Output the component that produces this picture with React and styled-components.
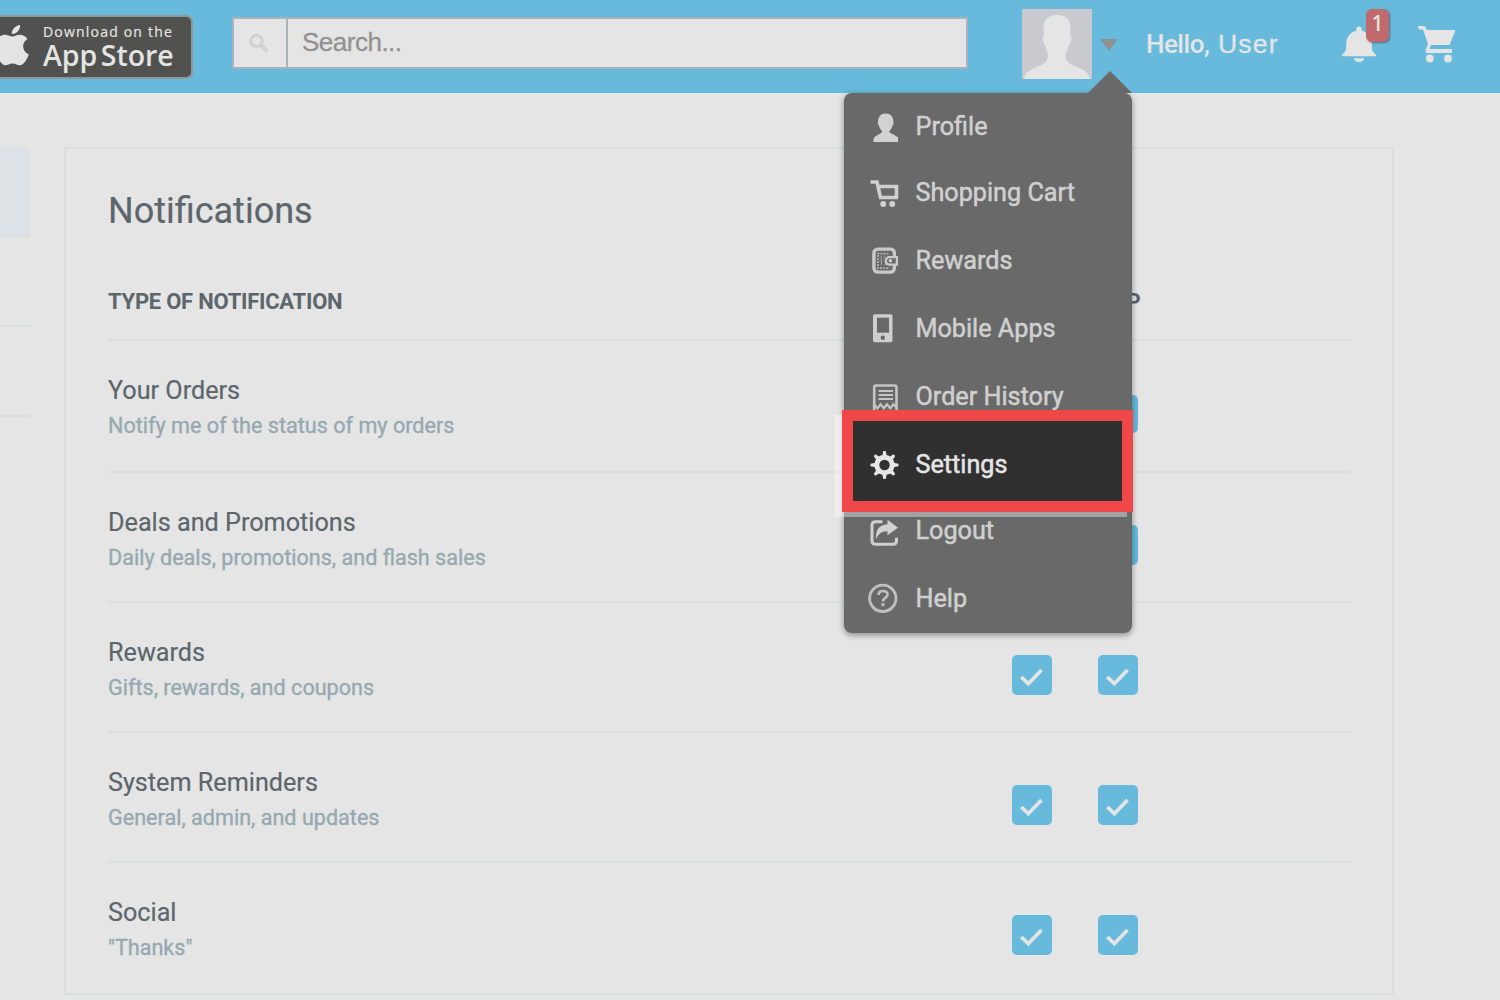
import React from "react";
import styled, { createGlobalStyle } from "styled-components";

const Global = createGlobalStyle`
  * { box-sizing: border-box; }
  body {
    margin: 0;
    background: #e5e5e5;
    font-family: Roboto, "Liberation Sans", sans-serif;
    color: #5c666c;
    overflow: hidden;
  }
`;

const Page = styled.div`
  width: 1500px;
  height: 1000px;
  overflow: hidden;
`;

const TopBar = styled.header`
  display: flex;
  align-items: flex-start;
  height: 93px;
  background: #67badb;
`;

const StoreBadge = styled.div`
  display: flex;
  width: 193px;
  height: 64px;
  margin-top: 15px;
  background: #51514f;
  border: 2px solid #8f9698;
  border-left: 0;
  border-radius: 0 7px 7px 0;
  color: #e4e4e2;
`;

const StoreLogo = styled.svg`
  flex: none;
  width: 30px;
  height: 60px;
`;

const StoreText = styled.div`
  display: flex;
  flex-direction: column;
  padding: 6px 0 0 13px;
  font-family: "Open Sans", sans-serif;
  white-space: nowrap;
`;

const StoreSmall = styled.span`
  font-size: 14px;
  line-height: 17px;
  letter-spacing: 1.2px;
  font-weight: 500;
  -webkit-text-stroke: 0.2px currentColor;
`;

const StoreLarge = styled.span`
  font-size: 28.5px;
  line-height: 30px;
  letter-spacing: 0;
  word-spacing: -4px;
  font-weight: 600;
`;

const Search = styled.div`
  display: flex;
  width: 736px;
  height: 52px;
  margin: 17px 0 0 39px;
  border: 2px solid #abb1b9;
  background: #e5e5e5;
`;

const SearchButton = styled.div`
  width: 54px;
  border-right: 2px solid #abb1b9;
  padding: 13px 0 0 14px;
`;

const SearchField = styled.div`
  padding-left: 14px;
  font-family: "Liberation Sans", Arial, sans-serif;
  font-size: 26px;
  line-height: 47px;
  letter-spacing: -0.5px;
  color: #929292;
  -webkit-text-stroke: 0.3px currentColor;
`;

const Account = styled.div`
  display: flex;
  margin-left: 54px;
  padding-top: 9px;
`;

const Avatar = styled.svg`
  width: 70px;
  height: 70px;
  background: #c9cacf;
`;

const Caret = styled.i`
  width: 0;
  height: 0;
  margin: 30px 0 0 8px;
  border: 9px solid transparent;
  border-top: 12px solid #8f9293;
  border-bottom: 0;
`;

const Greeting = styled.div`
  display: flex;
  width: 140px;
  margin-left: 28px;
  font-size: 26px;
  line-height: 70px;
  font-weight: 500;
  color: #e5e5e5;
  white-space: nowrap;
`;

const Hello = styled.span`
  width: 72px;
  letter-spacing: -0.5px;
`;

const UserName = styled.span`
  font-family: "Liberation Sans", Arial, sans-serif;
  font-size: 26.5px;
  line-height: 71px;
  font-weight: 400;
  letter-spacing: 1.2px;
  -webkit-text-stroke: 0.3px currentColor;
`;

const BellBox = styled.div`
  position: relative;
  width: 36px;
  height: 40px;
  margin: 24px 0 0 56px;
`;

const Count = styled.span`
  position: absolute;
  left: 24px;
  top: -15px;
  width: 23px;
  height: 33px;
  border-radius: 6px;
  background: #c06a6d;
  color: #e5e5e5;
  font: 500 21px/29px "Noto Sans", sans-serif;
  text-align: center;
  box-shadow: 1px 1px 2px rgba(60, 60, 90, 0.6);
`;

const CartBox = styled.div`
  margin: 23px 0 0 40px;
`;

const Body = styled.div`
  display: flex;
  align-items: flex-start;
  padding-top: 54px;
`;

const Side = styled.aside`
  width: 30px;
  margin-right: 34px;
`;

const SideItem = styled.div`
  height: 90px;
  background: ${(p) => (p.$active ? "#dde2e6" : "transparent")};
  border-bottom: 2px solid ${(p) => (p.$active ? "#d9e0e3" : "#dadfde")};
`;

const Panel = styled.main`
  width: 1330px;
  height: 848px;
  padding: 0 42px;
  border: 2px solid #dadfde;
`;

const Title = styled.h1`
  height: 110px;
  margin: 0;
  padding-top: 39px;
  font-size: 36px;
  line-height: 46px;
  font-weight: 400;
  -webkit-text-stroke: 0.2px currentColor;
`;

const HeadRow = styled.div`
  display: flex;
  height: 82px;
  border-bottom: 2px solid #dadfde;
  font-size: 22px;
  line-height: 86px;
  font-weight: 700;
`;

const HeadLabel = styled.div`
  width: 968px;
  letter-spacing: -0.25px;
`;

const HeadColumn = styled.div`
  width: 86px;
  text-align: center;
`;

const Row = styled.section`
  display: flex;
  height: ${(p) => p.$h}px;
  border-bottom: 2px solid ${(p) => (p.$last ? "transparent" : "#dadfde")};
`;

const RowText = styled.div`
  width: 904px;
  padding-top: 32px;
`;

const RowTitle = styled.div`
  font-size: 25.2px;
  line-height: 36px;
  -webkit-text-stroke: 0.2px currentColor;
`;

const RowNote = styled.div`
  font-size: 21.6px;
  line-height: 34px;
  color: #96a9b0;
  -webkit-text-stroke: 0.35px currentColor;
`;

const Check = styled.span`
  display: flex;
  width: 40px;
  height: ${(p) => (p.$short ? 38 : 40)}px;
  margin: ${(p) => (p.$short ? 54 : 52)}px 46px 0 0;
  border-radius: 5px;
  background: #67badb;
`;

const Menu = styled.nav`
  position: absolute;
  left: 844px;
  top: 93px;
  width: 288px;
  height: 540px;
  border-radius: 8px;
  background: #696969;
  box-shadow: 0 2px 6px rgba(0, 0, 0, 0.4);
`;

const Arrow = styled.i`
  position: absolute;
  left: 244px;
  top: -22px;
  border: 22px solid transparent;
  border-top: 0;
  border-bottom-color: #696969;
`;

const MenuItem = styled.div`
  display: flex;
  align-items: center;
  height: ${(p) => p.$h}px;
  padding-left: 22px;
  font-size: 25.2px;
  font-weight: 400;
  color: ${(p) => (p.$on ? "#e5e5e5" : "#d0d0d0")};
  -webkit-text-stroke: 0.5px currentColor;
  white-space: nowrap;
`;

const MenuIcon = styled.svg`
  flex: none;
  width: 36px;
  height: 36px;
  margin: 5px 13.5px 0 0;
`;

const Glow = styled.div`
  position: absolute;
  left: 835px;
  top: 415px;
  width: 292px;
  height: 102px;
  background: rgba(255, 255, 255, 0.38);
`;

const Highlight = styled.div`
  position: absolute;
  left: 842px;
  top: 410px;
  width: 291px;
  height: 102px;
  border: 11px solid #f04848;
  background: #303030;
  display: flex;
  align-items: center;

  ${MenuItem} {
    height: 85px;
    padding: 6px 0 0 13px;
  }
`;

const Icon = ({ name }) => (
  <MenuIcon viewBox="0 0 36 36" fill="none" stroke="none">
    {name === "profile" && (
      <path fill="#d2d2d2" transform="translate(-.8 0)" d="M20.500 2.500c-5 0-7.600 3.500-7.600 7.700 0 .9-.5 1.300-.3 2.300.2 1 .9 1.400 1.200 2.500.6 2.300 1.900 4 3.200 5.300-.3 2.700-5.600 3.300-7.900 6.200-.5.700-.8 1.500-1 4.500h24.700v-4.500c-2.300-3-8.500-3.200-8.800-6.200 1.300-1.300 2.600-3 3.200-5.300.3-1.100 1-1.500 1.200-2.500.2-1-.3-1.400-.3-2.300 0-4.200-2.600-7.700-7.600-7.700z" />
    )}
    {name === "cart" && (
      <>
        <path stroke="#cfcfcf" strokeWidth="3.600" d="M4.500 5H11L14.500 20.500H32M12 9.500H30.500V20.500" />
        <circle cx="17.200" cy="27" r="3" fill="#d2d2d2" />
        <circle cx="26.200" cy="27" r="3" fill="#d2d2d2" />
      </>
    )}
    {name === "rewards" && (
      <g transform="translate(-.6 -.4)">
        <rect x="8.500" y="4.500" width="20.500" height="23" rx="4" stroke="#c9c9c9" strokeWidth="3.400" />
        <path stroke="#b2b2b2" strokeWidth="1.700" strokeDasharray="2 1" d="M23 9H12.500V23.500H24" />
        <path stroke="#9b9b9b" strokeWidth="1.300" d="M16 11V21M19 11V13M19 20H22" />
        <path fill="#696969" stroke="#c9c9c9" strokeWidth="2.300" d="M31.500 12.500H23l-2.500 2v3.500l2.500 2h8.500z" />
        <circle cx="25" cy="16.200" r="1.800" fill="#cfcfcf" />
      </g>
    )}
    {name === "mobile" && (
      <g transform="translate(0 -.8)">
        <rect x="7" y="2" width="19.500" height="28" rx="2" fill="#cecece" />
        <rect x="11" y="5.500" width="12" height="15" fill="#696969" />
        <circle cx="16.800" cy="25.500" r="2.200" fill="#696969" />
      </g>
    )}
    {name === "orders" && (
      <>
        <path stroke="#c5c5c5" strokeWidth="2.600" d="M8.200 30V6.500q0-2 2-2H28.500q2 0 2 2V30" />
        <path stroke="#c5c5c5" strokeWidth="2.200" d="M8.500 24l3 3.300 3-4 3.300 4 3.200-4 3.200 4 3.200-4 3 3.300" />
        <path stroke="#c5c5c5" strokeWidth="2" d="M12.500 10H27M12.500 14H27M12.500 18H27" />
      </>
    )}
    {name === "settings" && (
      <g transform="translate(0 -1)">
        <circle cx="18.500" cy="17" r="7.700" stroke="#e5e5e5" strokeWidth="5" />
        {[0, 45, 90, 135, 180, 225, 270, 315].map((a) => (
          <path key={a} fill="#e5e5e5" transform={`rotate(${a} 18.500 17)`} d="M16.200 8L17.300 3h2.400L20.800 8z" />
        ))}
      </g>
    )}
    {name === "logout" && (
      <g transform="translate(0 1.300)">
        <path stroke="#cfcfcf" strokeWidth="3" d="M16.500 5.500H9.500q-3.500 0-3.500 3.500V24.500q0 3.500 3.500 3.500H27q3.500 0 3.500-3.500V21.500" />
        <path fill="#d2d2d2" d="M21.500 3.500L32 11.500 21.500 19V15Q13.500 14.500 10 23 9 9 21.500 8z" />
      </g>
    )}
    {name === "help" && (
      <g transform="translate(0 -.5)">
        <circle cx="16.800" cy="15.800" r="13.200" stroke="#bfbfbf" strokeWidth="2.900" />
        <path stroke="#bfbfbf" strokeWidth="2.700" d="M12.500 12.500q0-4 4.500-4t4.500 3.500q0 2-2.200 3.300T17 19" />
        <rect x="15.500" y="20.700" width="3" height="3" fill="#bfbfbf" />
      </g>
    )}
  </MenuIcon>
);

const items = [
  ["profile", "Profile", 66],
  ["cart", "Shopping Cart", 66],
  ["rewards", "Rewards", 70],
  ["mobile", "Mobile Apps", 66],
  ["orders", "Order History", 70],
  ["settings", "Settings", 66],
  ["logout", "Logout", 66],
  ["help", "Help", 71],
];

const rows = [
  ["Your Orders", "Notify me of the status of my orders", 132],
  ["Deals and Promotions", "Daily deals, promotions, and flash sales", 130],
  ["Rewards", "Gifts, rewards, and coupons", 130],
  ["System Reminders", "General, admin, and updates", 130],
  ["Social", "\"Thanks\"", 130],
];

const Tick = ({ short }) => (
  <Check $short={short}>
    <svg width="40" height="40" viewBox="0 0 40 40" fill="none">
      <path d="M9.300 22L16.300 28.700L29.500 15" stroke="#e5e5e5" strokeWidth="3.700" />
    </svg>
  </Check>
);

export default function App() {
  return (
    <Page>
      <Global />
      <TopBar>
        <StoreBadge>
          <StoreLogo viewBox="0 17 30 60" fill="#e4e4e2">
            <path d="M20 25c.5 4.500-3.500 9.300-8.200 9 -.5-4.300 3.700-8.500 8.200-9z" />
            <path d="M27.500 39c-6.500 4-5.500 12.500 1.300 15.500C27 59.500 23.500 65 20.200 65.300c-3 .2-4-1.800-7.500-1.800s-4.700 1.800-7.500 1.800C2 65-1 60.500-2 58V38.500C0 35.500 3 34.500 5.500 34.800c2.800.3 5 1.800 6.800 1.800s4.200-1.800 7.500-1.800c2.700 0 5.700 1.300 7.700 4.200z" />
          </StoreLogo>
          <StoreText>
            <StoreSmall>Download on the</StoreSmall>
            <StoreLarge>App Store</StoreLarge>
          </StoreText>
        </StoreBadge>
        <Search>
          <SearchButton>
            <svg width="24" height="24" viewBox="0 0 24 24" fill="none" stroke="#d1d1d1" strokeWidth="3">
              <circle cx="8.500" cy="9" r="5.700" />
              <path d="M12.500 13L19.500 19.500" strokeWidth="3.500" />
            </svg>
          </SearchButton>
          <SearchField>Search...</SearchField>
        </Search>
        <Account>
          <Avatar viewBox="0 0 70 70">
            <path fill="#e5e5e5" d="M35 6c-9 0-14 5-13.500 14l.3 7c-2 1-1.300 4 0 7 .5 1.500 1.500 2.500 2 4 1 4 2 5 2 8 0 5-1.500 7-5 9C14 59 3 61 2 70h66c-1-9-12-11-19.300-15-3.500-2-5-4-5-9 0-3 1.500-4 2.500-8 .5-1.500 1.500-2.500 2-4 1.300-3 2-6 0-7l.3-7c.5-8-3-14-13.500-14z" />
          </Avatar>
          <Caret />
          <Greeting>
            <Hello>Hello,</Hello>
            <UserName>User</UserName>
          </Greeting>
        </Account>
        <BellBox>
          <svg width="36" height="40" viewBox="0 0 36 40" fill="#e5e5e5">
            <path d="M14.500 5q0-2.500 2.500-2.500T19.500 5v1.500c7 2 10.300 7.500 10.300 13.500 0 6 .2 7.500 4.200 10.500v1.800H0v-1.800C4 27.500 4.200 26 4.200 20 4.200 14 7.500 8.500 14.500 6.500z" />
            <path d="M12 34.200H22Q21.500 38 17 38T12 34.200z" />
          </svg>
          <Count>1</Count>
        </BellBox>
        <CartBox>
          <svg width="40" height="40" viewBox="0 0 40 40" fill="#e5e5e5">
            <path d="M0 3H6.500L9 7H37.500L31.500 22H13L11.500 26H34V30H8.500Q7 29.500 7.800 26.500L10 21 5 6.500H1z" />
            <circle cx="11.800" cy="35.500" r="3.900" />
            <circle cx="30" cy="35.500" r="3.900" />
          </svg>
        </CartBox>
      </TopBar>
      <Body>
        <Side>
          <SideItem $active />
          <SideItem />
          <SideItem />
        </Side>
        <Panel>
          <Title>Notifications</Title>
          <HeadRow>
            <HeadLabel>TYPE OF NOTIFICATION</HeadLabel>
            <HeadColumn>APP</HeadColumn>
          </HeadRow>
          {rows.map(([title, note, h], i) => (
            <Row key={title} $h={h} $last={i === rows.length - 1}>
              <RowText>
                <RowTitle>{title}</RowTitle>
                <RowNote>{note}</RowNote>
              </RowText>
              <Tick short={i === 0} />
              <Tick short={i === 0} />
            </Row>
          ))}
        </Panel>
      </Body>
      <Menu>
        <Arrow />
        {items.map(([icon, label, h]) => (
          <MenuItem key={label} $h={h}>
            {icon !== "settings" && (
              <>
                <Icon name={icon} />
                {label}
              </>
            )}
          </MenuItem>
        ))}
      </Menu>
      <Glow />
      <Highlight>
        <MenuItem $on>
          <Icon name="settings" />
          Settings
        </MenuItem>
      </Highlight>
    </Page>
  );
}
